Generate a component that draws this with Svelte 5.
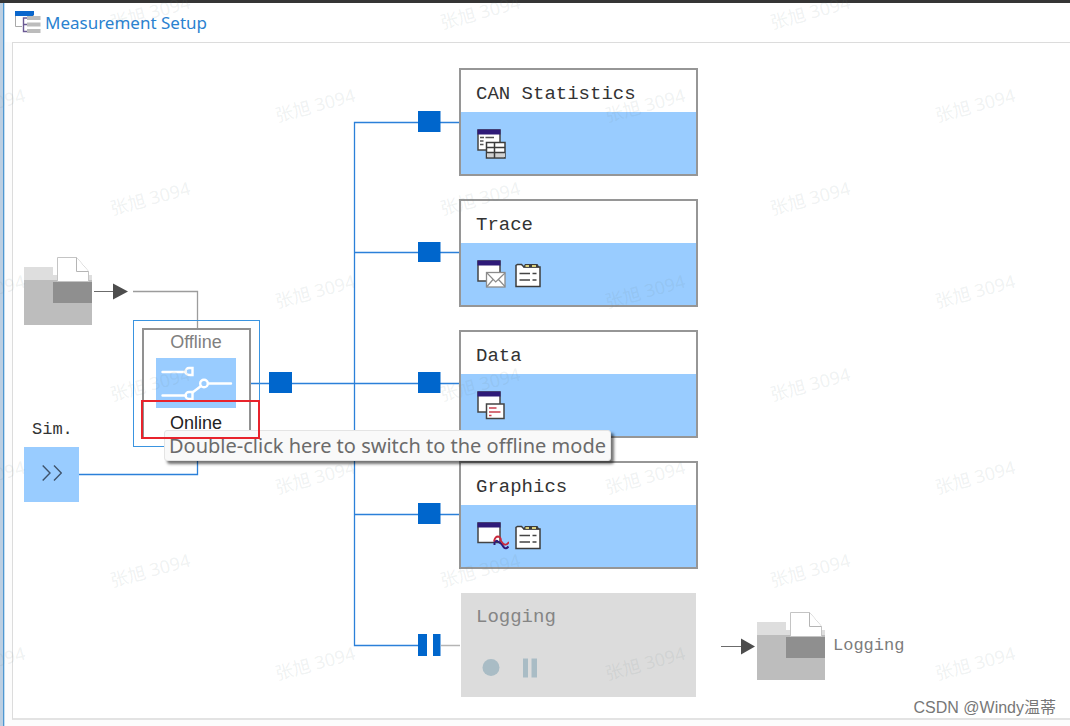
<script>
  const modules = [
    { name: 'CAN Statistics', y: 25, icons: ['stats'] },
    { name: 'Trace', y: 156, icons: ['trace', 'log'] },
    { name: 'Data', y: 287, icons: ['data'] },
    { name: 'Graphics', y: 418, icons: ['graph', 'log'] }
  ];

  const marks = [];
  for (let row = 0; row < 8; row++) {
    for (let col = 0; col < (row % 2 ? 4 : 3); col++) {
      marks.push({ x: (row % 2 ? -15 : 150) + col * 330, y: 12 + row * 93 });
    }
  }
</script>

{#snippet folder()}
  <svg width="68" height="68" viewBox="0 0 68 68" aria-hidden="true">
    <path d="M0 10H29V18H68V24H0Z" fill="#dedede" />
    <rect y="23" width="68" height="45" fill="#bdbdbd" />
    <rect x="29" y="25" width="39" height="21" fill="#8f8f8f" />
    <path d="M33.5 .5H52.5L64.5 14.5V24.5H33.5Z" fill="#fff" stroke="#c4c4c4" />
    <path d="M52.5 .5V14.5H64.5" fill="#fff" stroke="#b5b5b5" />
  </svg>
{/snippet}

{#snippet win(h)}
  <rect x="1" y="1" width="22" height={h} fill="#fff" stroke="#444" stroke-width="1.5" />
  <rect x=".5" y=".5" width="23" height="5" fill="#2e1a78" />
{/snippet}

{#snippet icon(kind)}
  <svg width="32" height="32" viewBox="0 0 32 32" aria-hidden="true">
    {#if kind === 'stats'}
      {@render win(20)}
      <path d="M3 8.500H7M8.500 8.500H17M3 12H6.500M3 15.500H6.500" stroke="#555" stroke-width="1.4" />
      <rect x="9.500" y="13.500" width="18.500" height="15.500" fill="#fff" stroke="#3c3c3c" stroke-width="1.5" />
      <path d="M10 24H28V28H10Z" fill="#d0d0d0" />
      <path d="M9.500 18.500H28M9.500 23.500H28M17.500 13.500V29" stroke="#3c3c3c" stroke-width="1.5" />
    {:else if kind === 'trace'}
      {@render win(20)}
      <rect x="9.500" y="12.500" width="18.500" height="14.500" fill="#fff" stroke="#8b8b8b" stroke-width="1.3" />
      <path d="M10 13L18.700 22L28 13M10 26.500L16 19.500M28 26.500L21.500 19.500" fill="none" stroke="#8b8b8b" stroke-width="1.2" />
    {:else if kind === 'data'}
      {@render win(20)}
      <rect x="9.500" y="13" width="17.500" height="14.500" fill="#fff" stroke="#444" stroke-width="1.5" />
      <path d="M12 17H19.500M12 21H23.500M12 24.500H14.500" stroke="#c9404f" stroke-width="1.4" />
    {:else if kind === 'graph'}
      {@render win(19.5)}
      <path d="M17.500 23V20Q19 18 21 19.500L24.500 22L27 25.500Q29 27.500 31.500 24.500" fill="none" stroke="#2e1a78" stroke-width="2" />
      <path d="M17 19.500Q18 14.500 21 14.500Q24 15 24 19L26.500 22Q29 24 32 20" fill="none" stroke="#c8283c" stroke-width="1.8" />
    {:else}
      <path d="M1 26.500V5.500L2.500 4.500H6.500L9 7H25V26.500Z" fill="#fff" stroke="#3c3c3c" stroke-width="1.5" />
      <path d="M8 7.500L10 4H22.500L24.500 7.500Z" fill="#3c3c3c" />
      <path d="M10.500 5H14V7H10.500ZM17 5H21V7H17Z" fill="#d9cf7c" />
      <path d="M4.500 13.500H15M17.500 13.500H21.500M4.500 20H15M17.500 20H21.500" stroke="#444" stroke-width="1.5" />
    {/if}
  </svg>
{/snippet}

<main class="window">
  <header>
    <svg width="26" height="23" viewBox="0 0 26 23" aria-hidden="true">
      <rect width="19" height="5" fill="#0a66cc" />
      <path d="M.5 5V15.500H7M18.500 4V6" fill="none" stroke="#a9a9a9" />
      <path d="M13 7H8.500V20.500H13M8.500 13.500H13" fill="none" stroke="#6b5a94" stroke-width="1.4" />
      <path d="M12 5H25.500V9H12ZM12 11.500H25.500V15.500H12ZM12 18H25.500V22H12Z" fill="#bcbcbc" />
    </svg>
    <h1>Measurement Setup</h1>
  </header>

  <section class="canvas" aria-label="Measurement Setup">
    <svg class="wires" aria-hidden="true">
      <g transform="translate(-13 -43)" fill="none">
        <path d="M94 291.500H114M721 646.500H742" stroke="#6b6b6b" />
        <path d="M113 283.500L128 291.500L113 299.500ZM741 638.500L755 646.500L741 654.500Z" fill="#4d4d4d" />
        <path
          d="M79 474.500H197.500V438M251 383.500H460M460 122.500H354.500V645.500H420M354.500 252.500H460M354.500 514.500H460"
          stroke="#2b80d9"
          stroke-width="1.3"
        />
        <path d="M133 291.500H197.500V329" stroke="#9c9c9c" stroke-width="1.3" />
        <path d="M441 645.500H460" stroke="#b5b5b5" stroke-width="1.5" />
        <path
          d="M269 372h23v21h-23ZM418 111h22.500v21H418ZM418 242h22.500v20H418ZM418 372h22.500v21H418ZM418 503h22.500v21H418ZM418 634h9v22h-9ZM433 634h7.500v22H433Z"
          fill="#0066cc"
        />
      </g>
    </svg>

    <div class="node source">{@render folder()}</div>

    <div class="node sim">
      <span>Sim.</span>
      <button aria-label="Simulation">
        <svg width="20" height="16" viewBox="0 0 20 16" aria-hidden="true">
          <path d="M.7 .5L8 8L.7 15.500M12 .5L19.300 8L12 15.500" fill="none" stroke="#3f536b" stroke-width="1.4" />
        </svg>
      </button>
    </div>

    <div class="node selection">
      <button class="switch" aria-describedby="mode-tip">
        <span class="off">Offline</span>
        <svg width="80" height="50" viewBox="0 0 80 50" aria-hidden="true">
          <rect width="80" height="50" fill="#99ccff" />
          <g fill="none" stroke="#fff" stroke-width="2.4" stroke-linecap="round">
            <path d="M6.500 14H30M6.500 37.500H30M52 25.500H75M36.500 34.500L45 28" />
            <path d="M36.500 17H33A3.400 3.400 0 0 1 33 10H36.500Z" />
            <path d="M36.500 41H33A3.400 3.400 0 0 1 33 34H36.500Z" />
            <circle cx="48" cy="25.500" r="3.800" />
          </g>
        </svg>
        <span>Online</span>
      </button>
    </div>

    {#each modules as m}
      <article class="node module" style="top: {m.y}px">
        <h2>{m.name}</h2>
        <div class="body">
          {#each m.icons as kind}
            <button aria-label="{m.name} {kind}">{@render icon(kind)}</button>
          {/each}
        </div>
      </article>
    {/each}

    <article class="node module disabled">
      <h2>Logging</h2>
      <svg width="64" height="22" viewBox="0 0 64 22" aria-hidden="true">
        <circle cx="14" cy="10.500" r="8.500" fill="#a9bcc5" />
        <path d="M46 1.500h5v19h-5ZM54.500 1.500h5.500v19h-5.500Z" fill="#a9bcc5" />
      </svg>
    </article>

    <div class="node target">{@render folder()}<span>Logging</span></div>

    <div class="tip" id="mode-tip" role="tooltip">Double-click here to switch to the offline mode</div>
    <div class="callout"></div>
  </section>

  <svg class="marks" aria-hidden="true">
    {#each marks as w}
      <text transform="translate({w.x} {w.y}) rotate(-15)" text-anchor="middle" dominant-baseline="central">张旭 3094</text>
    {/each}
  </svg>
  <div class="credit">CSDN @Windy温蒂</div>
</main>

<style>
  :global(body) {
    margin: 0;
    background: #fff;
  }
  * {
    box-sizing: border-box;
  }
  .window {
    position: relative;
    display: flex;
    flex-direction: column;
    min-height: 100vh;
    padding: 3px 0 6px 12px;
    overflow: hidden;
    background:
      linear-gradient(#353535, #353535) top / 100% 3px no-repeat,
      linear-gradient(90deg, #bccfe2 3px, #4f97d1 3px 4px, #c4ddf0 4px 5px, #fcfcfc 5px);
  }
  header {
    display: flex;
    align-items: center;
    gap: 4px;
    height: 39px;
    margin-left: -7px;
    padding-left: 10px;
    background: #fff;
  }
  h1 {
    margin: 0;
    font: 400 17px/24px 'Noto Sans', sans-serif;
    color: #2a82d0;
  }
  .canvas {
    position: relative;
    flex: 1;
    min-height: 670px;
    background: #fff;
    border: 1px solid #dcdcdc;
    border-bottom: 2px solid #e3e3e3;
    border-right: 0;
  }
  .wires,
  .marks {
    position: absolute;
    inset: 0;
    width: 100%;
    height: 100%;
  }
  .marks {
    pointer-events: none;
    font: 18px 'Noto Sans', 'Noto Sans CJK SC', sans-serif;
    fill: rgba(110, 130, 130, 0.11);
  }
  .node {
    position: absolute;
    font: 19px/24px 'Liberation Mono', monospace;
    color: #333;
  }
  .node svg {
    display: block;
  }
  button {
    padding: 0;
    border: 0;
    background: none;
    color: inherit;
    font: inherit;
  }
  .source {
    left: 11px;
    top: 214px;
  }
  .sim {
    left: 11px;
    top: 375px;
    font-size: 17px;
  }
  .sim span {
    display: block;
    padding: 0 0 5px 8px;
  }
  .sim button {
    display: grid;
    place-items: center;
    width: 55px;
    height: 55px;
    padding-bottom: 4px;
    background: #99ccff;
  }
  .selection {
    left: 120px;
    top: 277px;
    padding: 7px 8px;
    border: 1px solid #3a94e0;
  }
  .switch {
    display: flex;
    flex-direction: column;
    align-items: center;
    gap: 3px;
    width: 109px;
    height: 111px;
    padding-right: 1px;
    border: 2px solid #919191;
    font: 18px/25px 'Liberation Sans', sans-serif;
    color: #222;
  }
  .off {
    color: #808080;
  }
  .module {
    left: 446px;
    width: 239px;
    height: 108px;
    display: flex;
    flex-direction: column;
    border: 2px solid #969696;
    background: #fff;
  }
  h2 {
    height: 42px;
    margin: 0;
    padding: 6px 0 0 15px;
    font: inherit;
    line-height: 36px;
  }
  .body {
    display: flex;
    flex: 1;
    align-items: flex-start;
    gap: 6px;
    padding: 17px 16px 0;
    background: #99ccff;
  }
  .disabled {
    top: 548px;
    background: #dcdcdc;
    border-color: transparent;
    background-clip: padding-box;
    color: #858585;
  }
  .disabled svg {
    margin: 22px 0 0 16px;
  }
  .target {
    left: 744px;
    top: 569px;
    display: flex;
    align-items: center;
    gap: 8px;
    font-size: 17px;
    color: #7c7c7c;
  }
  .tip {
    position: absolute;
    left: 151px;
    top: 387px;
    padding: 0 4px;
    border: 1px solid #e4e4e4;
    border-radius: 3px;
    background: #f9f9f9;
    box-shadow: 3px 3px 3px rgba(0, 0, 0, 0.55);
    font: 20px/29px 'Noto Sans', sans-serif;
    color: #6b6b6b;
    white-space: nowrap;
  }
  .callout {
    position: absolute;
    left: 128px;
    top: 357px;
    width: 119px;
    height: 39px;
    border: 2px solid #e8232c;
    pointer-events: none;
  }
  .credit {
    position: absolute;
    right: 14px;
    bottom: 6px;
    font: 16px/24px 'Liberation Sans', 'Noto Sans CJK SC', sans-serif;
    color: #777;
  }
</style>
